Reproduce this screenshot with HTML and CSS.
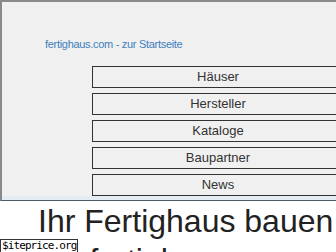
FILE: index.html
```html
<!DOCTYPE html>
<html lang="de">
<head>
  <meta charset="UTF-8">
  <title>fertighaus.com</title>
  <link rel="stylesheet" href="styles.css">
</head>
<body>

  <div class="head">
    <a class="home" href="#">fertighaus.com - zur Startseite</a>
    <div class="nav">
      <a class="nav-btn" href="#">Häuser</a>
      <a class="nav-btn" href="#">Hersteller</a>
      <a class="nav-btn" href="#">Kataloge</a>
      <a class="nav-btn" href="#">Baupartner</a>
      <a class="nav-btn" href="#">News</a>
    </div>
  </div>

  <div class="main">
    <h1>Ihr Fertighaus bauen mit fertighaus.com</h1>
  </div>

  <div class="badge">$iteprice.org</div>

</body>
</html>
```

FILE: styles.css
```css
body {
  margin: 0;
  background: #fff;
  font-family: "Liberation Sans", Arial, sans-serif;
  overflow: hidden;
}
.head {
  background: #f0f0f0;
  border-top: 2px solid #8a8a8a;
  border-left: 2px solid #8a8a8a;
  height: 198px;
  box-shadow: inset 0 -4px 0 #e4ecf4;
  border-bottom: 1px solid #4c5a68;
}
.home {
  display: block;
  padding: 36px 0 0 43px;
  height: 17px;
  font-size: 11px;
  letter-spacing: -0.3px;
  color: #3d7fbf;
  text-decoration: none;
}
.nav {
  display: flex;
  flex-direction: column;
  gap: 5px;
  margin: 11px 0 0 90px;
  width: 252px;
}
.nav-btn {
  display: block;
  height: 20px;
  line-height: 20px;
  border: 1px solid #333;
  text-align: center;
  font-size: 13px;
  color: #333;
  text-decoration: none;
}
.main {
  height: 51px;
  padding: 1px 0 0 38px;
  overflow: hidden;
}
h1 {
  margin: 0;
  width: 300px;
  font-size: 32px;
  font-weight: normal;
  line-height: 39px;
  color: #222;
}
.badge {
  position: fixed;
  left: 0;
  bottom: 0;
  padding: 0 1px;
  background: #fff;
  border: 1px solid #333;
  border-bottom: none;
  font-family: "DejaVu Sans Mono", monospace;
  font-size: 11px;
  letter-spacing: -0.9px;
  line-height: 12px;
  color: #000;
}
```
